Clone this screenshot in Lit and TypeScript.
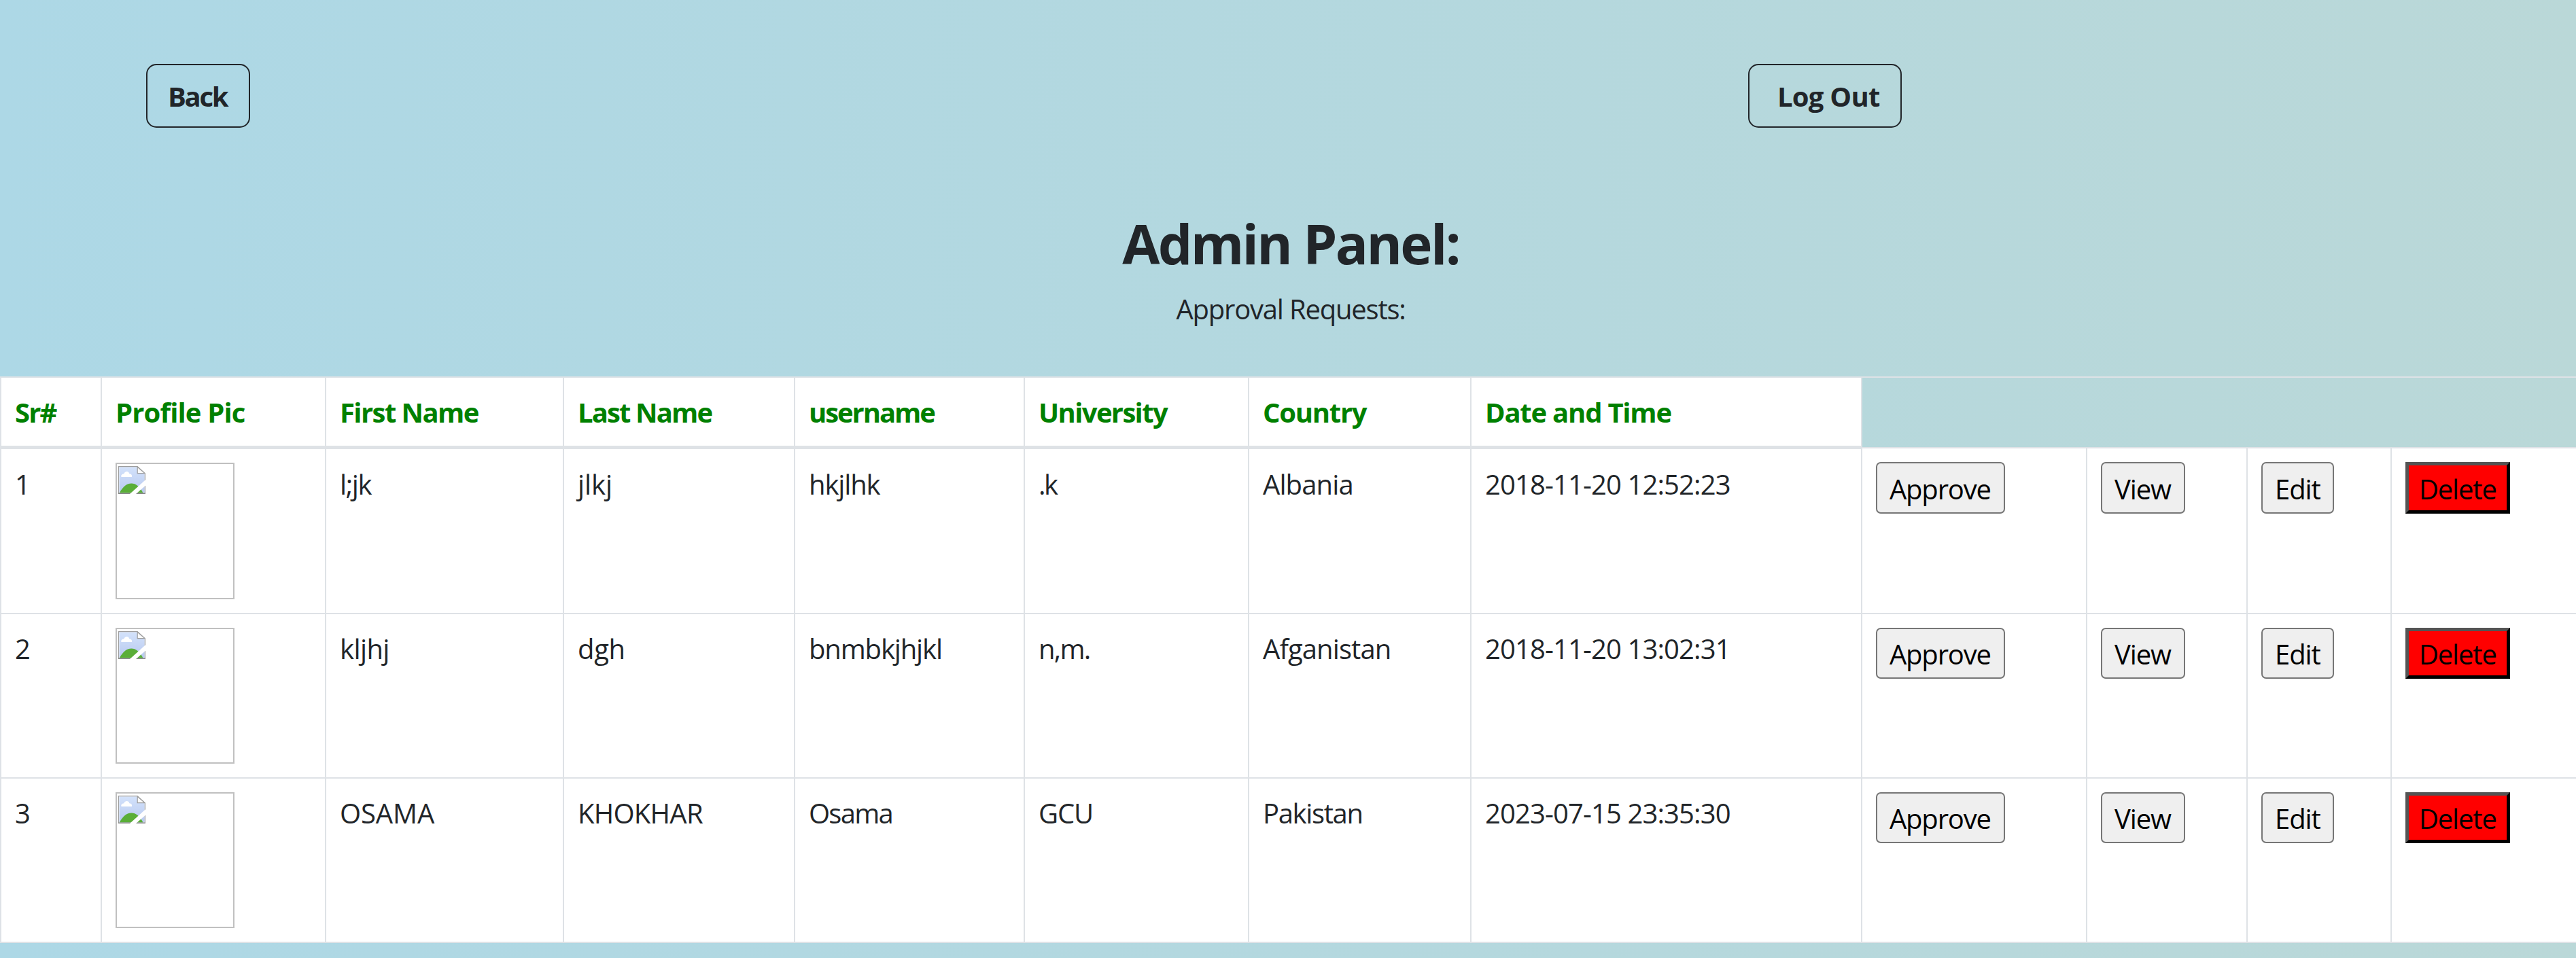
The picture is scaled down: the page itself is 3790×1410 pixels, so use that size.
import { LitElement, html, css, svg } from "lit";
import { customElement, property } from "lit/decorators.js";
import { classMap } from "lit/directives/class-map.js";
import { styleMap } from "lit/directives/style-map.js";

/** A piece of text with its tracking in pixels. */
type Label = [text: string, tracking: number];

const HEADERS: Label[] = [
  ["Sr#", -1.8],
  ["Profile Pic", -0.85],
  ["First Name", -1.58],
  ["Last Name", -1.87],
  ["username", -2.07],
  ["University", -1.65],
  ["Country", -1.26],
  ["Date and Time", -1.21],
];

const ROWS: Label[][] = [
  [["1", 0], ["l;jk", -1.4], ["jlkj", -0.1], ["hkjlhk", -1.13], [".k", -2.5], ["Albania", -0.89], ["2018-11-20 12:52:23", -0.88]],
  [["2", 0], ["kljhj", -0.6], ["dgh", -0.3], ["bnmbkjhjkl", -1.15], ["n,m.", -1.7], ["Afganistan", -0.9], ["2018-11-20 13:02:31", -0.88]],
  [["3", 0], ["OSAMA", -0.1], ["KHOKHAR", -0.75], ["Osama", -1.75], ["GCU", -1.1], ["Pakistan", -1.35], ["2023-07-15 23:35:30", -0.88]],
];

const ACTIONS: { label: Label; width: number; danger?: boolean }[] = [
  { label: ["Approve", -1.2], width: 190 },
  { label: ["View", -1.1], width: 124 },
  { label: ["Edit", -1.07], width: 107 },
  { label: ["Delete", -1.18], width: 154, danger: true },
];

const tracked = ([text, tracking]: Label) =>
  html`<span class="text" style=${styleMap({ letterSpacing: `${tracking}px` })}>${text}</span>`;

@customElement("missing-picture")
export class MissingPicture extends LitElement {
  static styles = css`
    :host {
      display: block;
      box-sizing: border-box;
      width: 175px;
      border: 2px solid #c0c0c0;
      padding: 3px 2px;
    }
    svg {
      display: block;
    }
  `;

  render() {
    return html`<svg width="40" height="41" viewBox="0 0 40 41" aria-hidden="true">
      ${svg`
        <defs>
          <linearGradient id="sky" x1="0" y1="0" x2="0" y2="1">
            <stop offset="0" stop-color="#d3e2fb"></stop>
            <stop offset="1" stop-color="#b8c9ef"></stop>
          </linearGradient>
        </defs>
        <path d="M0 0H28L40 11V41H0Z" fill="#e9f0fc"></path>
        <path d="M1.8 1.8H27.5L38.5 12V39.2H1.8Z" fill="url(#sky)"></path>
        <path d="M4.5 16C3.6 13 6 11.3 8.3 11.5C9.2 7.5 15.2 6.4 16.3 11.2C19.4 11.4 20.6 13.6 20 16Z" fill="#fff"></path>
        <path d="M1.8 39.4C7 29.5 13 25.4 19.3 25.4C26 25.4 31.5 30 36.5 39.4Z" fill="#5aae38"></path>
        <path d="M0.5 40.5V0.6H28.2L39.4 11V40.4Z" fill="none" stroke="#9d9d9d" stroke-width="1.2"></path>
        <path d="M0 40.2H40" stroke="#858585" stroke-width="1.5"></path>
        <path d="M28.2 1.2V10.6H39Z" fill="#fbfbfb" stroke="#9d9d9d" stroke-width="1.2"></path>
        <path d="M17 41L40.2 20V28.5L26 41Z" fill="#fff"></path>
      `}
    </svg>`;
  }
}

@customElement("request-row")
export class RequestRow extends LitElement {
  @property({ attribute: false }) cells: Label[] = [];
  @property({ type: Boolean, reflect: true }) first = false;

  static styles = css`
    :host {
      display: grid;
      grid-template-columns: var(--columns);
      grid-template-rows: 100%;
      height: 242px;
    }
    :host([first]) {
      height: 243px;
    }
    .cell {
      box-sizing: border-box;
      background: #fff;
      border-left: 2px solid #dee2e6;
      border-bottom: 2px solid #dee2e6;
      padding: 20px 0 0 20px;
      white-space: nowrap;
    }
    .cell > .text {
      display: block;
      margin-top: 1px;
    }
    :host([first]) .cell > .text {
      margin-top: 2px;
    }
    missing-picture {
      height: 200px;
    }
    :host([first]) missing-picture {
      height: 201px;
    }
    :host([first]) .action {
      margin-top: -3px;
      border-top: 2px solid #dee2e6;
    }
    button {
      display: block;
      box-sizing: border-box;
      height: 75px;
      margin: 0;
      padding: 7px 0 4px 18px;
      border: 2px solid #767676;
      border-radius: 7px;
      background: #efefef;
      color: #000;
      font: inherit;
      text-align: left;
      overflow: visible;
    }
    button .text {
      display: block;
      height: 60px;
    }
    :host([first]) button {
      height: 76px;
    }
    button.danger {
      padding: 4px 0 1px 15px;
      border: 5px solid;
      border-color: #545454 #000 #000 #545454;
      border-radius: 0;
      background: #f00;
    }
  `;

  render() {
    const [serial, ...rest] = this.cells;
    return html`
      <div class="cell">${tracked(serial)}</div>
      <div class="cell"><missing-picture></missing-picture></div>
      ${rest.map((c) => html`<div class="cell">${tracked(c)}</div>`)}
      ${ACTIONS.map(
        (a) => html`<div class="cell action">
          <button class=${classMap({ danger: !!a.danger })} style=${styleMap({ width: `${a.width}px` })}>${tracked(a.label)}</button>
        </div>`,
      )}
    `;
  }
}

@customElement("app-root")
export class AppRoot extends LitElement {
  static styles = css`
    :host {
      --columns: 148px 330px 350px 340px 338px 330px 327px 575px 331px 236px 212px 1fr;
      display: block;
      box-sizing: border-box;
      min-height: 1410px;
      background: linear-gradient(to right, #add8e6, #bad8d8);
      color: #212529;
      font: 400 40px/60px "Open Sans", "Noto Sans", sans-serif;
    }
    nav {
      display: grid;
      grid-template-columns: 2357px auto;
      justify-content: start;
      justify-items: start;
      padding: 94px 0 0 215px;
    }
    nav a {
      box-sizing: border-box;
      height: 94px;
      border: 2px solid #212529;
      border-radius: 15px;
      padding: 16px 0 0 30px;
      font-weight: 700;
      white-space: nowrap;
    }
    .back {
      width: 153px;
    }
    .logout {
      width: 226px;
      padding-left: 41px;
    }
    header {
      padding: 122px 0 69px 8px;
      text-align: center;
    }
    h1 {
      margin: 0 0 19px;
      font-size: 80px;
      line-height: 96px;
      font-weight: 700;
    }
    p {
      margin: 0;
    }
    .head {
      display: grid;
      grid-template-columns: var(--columns);
      height: 107px;
      box-sizing: border-box;
      border-top: 2px solid #dee2e6;
      color: #008000;
      font-weight: 700;
    }
    .th {
      box-sizing: border-box;
      background: #fff;
      border-left: 2px solid #dee2e6;
      border-bottom: 5px solid #dee2e6;
      padding: 21px 0 0 20px;
      white-space: nowrap;
    }
    .edge {
      border-left: 2px solid #dee2e6;
    }
  `;

  render() {
    return html`
      <nav>
        <a class="back">${tracked(["Back", -2.3])}</a>
        <a class="logout">${tracked(["Log Out", -0.75])}</a>
      </nav>
      <header>
        <h1>${tracked(["Admin Panel:", -2.68])}</h1>
        <p>${tracked(["Approval Requests:", -1.2])}</p>
      </header>
      <div class="head">
        ${HEADERS.map((h) => html`<div class="th">${tracked(h)}</div>`)}
        <div class="edge"></div>
      </div>
      ${ROWS.map((r, i) => html`<request-row .cells=${r} ?first=${i === 0}></request-row>`)}
    `;
  }
}
